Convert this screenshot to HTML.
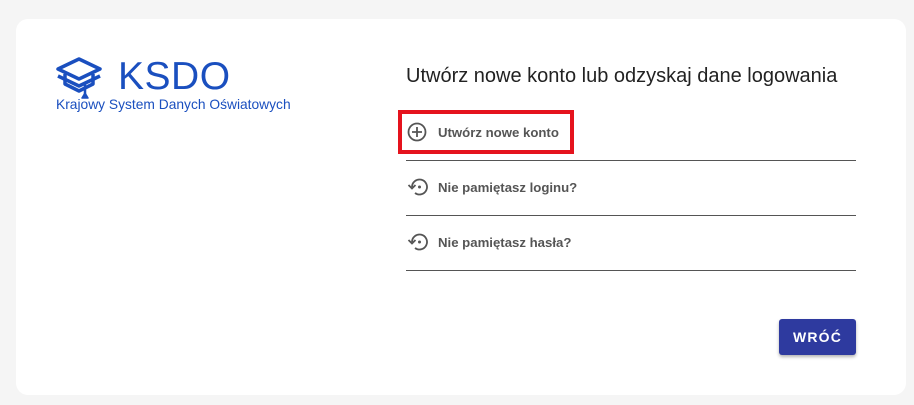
<!DOCTYPE html>
<html><head><meta charset="utf-8"><style>
html,body{margin:0;padding:0;width:914px;height:405px;background:#f5f5f5;font-family:"Liberation Sans",Roboto,sans-serif;overflow:hidden}
.card{position:absolute;left:16px;top:19px;width:890px;height:376px;background:#fff;border-radius:12px}
.logo{position:absolute;left:55px;top:56px}
.ksdo{position:absolute;left:118px;top:54px;font-size:39px;color:#1a4fbf;letter-spacing:0.5px;line-height:46px}
.sub{position:absolute;left:56px;top:97px;font-size:13.8px;color:#1a4fbf}
h1{position:absolute;left:406px;top:65px;margin:0;font-weight:normal;font-size:20px;color:#222}
.item{position:absolute;left:406px;width:450px;height:54px;border-bottom:1px solid #555}
.item span{position:absolute;left:32px;top:19px;font-size:13.2px;font-weight:bold;color:#555}
.item svg{position:absolute;left:1px;top:16px}
.red{position:absolute;left:398px;top:110px;width:168px;height:36px;border:4px solid #e5131d}
.btn{position:absolute;left:779px;top:319px;width:77px;height:36px;background:#2e3a9f;border-radius:3px;color:#fff;font-weight:bold;font-size:14px;letter-spacing:1.2px;text-align:center;line-height:36px;box-shadow:0 2px 3px rgba(0,0,0,.3)}
</style></head><body>
<div class="card"></div>
<svg class="logo" width="48" height="50" viewBox="0 0 48 50" fill="none" stroke="#1a4fbf" stroke-width="3.5" stroke-linejoin="round">
<path d="M3 13 L24 3 L45 13 L24 23 Z"/>
<path d="M3 20 L24 30 L45 20"/>
<path d="M10 18 V28 L24 35 L38 28 V18"/>
<path d="M30 28 V38" stroke-width="2.5"/>
<path d="M27 42 L30 37 L33 42 Z" fill="#1a4fbf" stroke-width="1.5"/>
</svg>
<div class="ksdo">KSDO</div>
<div class="sub">Krajowy System Danych Oświatowych</div>
<h1>Utwórz nowe konto lub odzyskaj dane logowania</h1>
<div class="item" style="top:106px"><svg width="20" height="20" viewBox="0 0 20 20" fill="none" stroke="#555" stroke-width="1.8"><circle cx="10" cy="10" r="8.5"/><path d="M10 5v10M5 10h10"/></svg><span>Utwórz nowe konto</span></div>
<div class="item" style="top:161px"><svg width="22" height="20" viewBox="0 0 22 20" fill="none" stroke="#555" stroke-width="1.8"><path d="M5 10 A7.5 7.5 0 1 1 8 16"/><path d="M1.5 8 L5 11.5 L8.5 8" /><circle cx="12.5" cy="10" r="1.5" fill="#555" stroke="none"/></svg><span>Nie pamiętasz loginu?</span></div>
<div class="item" style="top:216px"><svg width="22" height="20" viewBox="0 0 22 20" fill="none" stroke="#555" stroke-width="1.8"><path d="M5 10 A7.5 7.5 0 1 1 8 16"/><path d="M1.5 8 L5 11.5 L8.5 8" /><circle cx="12.5" cy="10" r="1.5" fill="#555" stroke="none"/></svg><span>Nie pamiętasz hasła?</span></div>
<div class="red"></div>
<div class="btn">WRÓĆ</div>
</body></html>
